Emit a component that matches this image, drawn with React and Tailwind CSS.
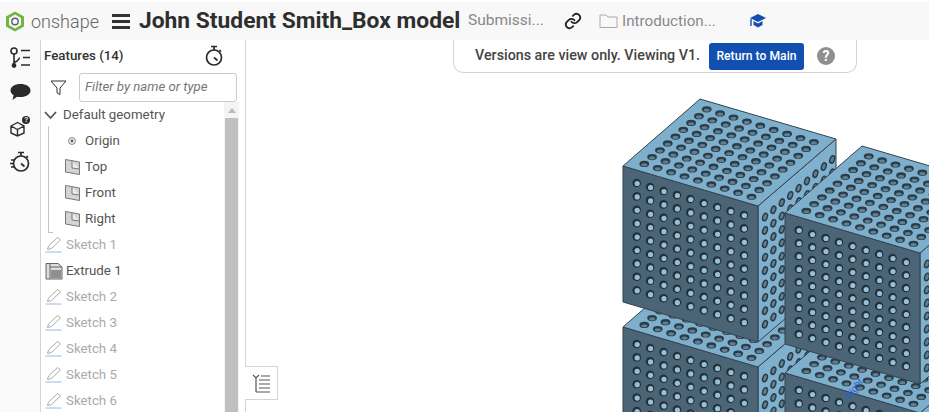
import { Fragment } from "react";

const range = (n) => Array.from({ length: n }, (_, i) => i);

// one 9x9 cube of the perforated box, positioned by its left vertex
const Cube = ({ x, y, h = 136, step = 13.4 }) => {
    const top = `${x},${y} ${x + 77},${y - 67} ${x + 213},${y - 27} ${x + 135},${y + 40}`;
    const left = `${x},${y} ${x + 135},${y + 40} ${x + 135},${y + 40 + h} ${x},${y + h}`;
    const right = `${x + 135},${y + 40} ${x + 213},${y - 27} ${x + 213},${y - 27 + h} ${x + 135},${y + 40 + h}`;
    return (
        <g>
            <polygon points={right} fill="#7fb0cd" stroke="#33434e" strokeWidth="1" />
            {range(9).map((c) =>
                range(9).map((r) => {
                    const cx = x + 142 + c * 8.4;
                    const cy = y + 51 - c * 7.2 + r * step;
                    return (
                        <Fragment key={`r${c}-${r}`}>
                            <ellipse cx={cx} cy={cy} rx="2.9" ry="4.6" fill="#2c3c46" transform={`rotate(20 ${cx} ${cy})`} />
                            <ellipse cx={cx} cy={cy} rx="1.5" ry="3" fill="#5f7f93" transform={`rotate(20 ${cx} ${cy})`} />
                        </Fragment>
                    );
                }),
            )}
            <polygon points={left} fill="#4b6576" stroke="#33434e" strokeWidth="1" />
            {range(9).map((c) =>
                range(9).map((r) => (
                    <Fragment key={`l${c}-${r}`}>
                        <circle cx={x + 13.7 + c * 13.4} cy={y + 17 + c * 4 + r * step} r="4.3" fill="#22313a" />
                        <circle cx={x + 14.2 + c * 13.4} cy={y + 17.5 + c * 4 + r * step} r="2.6" fill="#97c0d6" />
                    </Fragment>
                )),
            )}
            <polygon points={top} fill="#7eafcc" stroke="#33434e" strokeWidth="1" />
            {range(9).map((c) =>
                range(9).map((r) => (
                    <Fragment key={`t${c}-${r}`}>
                        <ellipse cx={x + 83.7 + c * 13.4 - r * 7.8} cy={y - 56.7 + c * 4.1 + r * 6.83} rx="4.9" ry="3.1" fill="#2c3c46" />
                        <ellipse cx={x + 83.7 + c * 13.4 - r * 7.8} cy={y - 55.9 + c * 4.1 + r * 6.83} rx="3" ry="1.6" fill="#5f7f93" />
                    </Fragment>
                )),
            )}
        </g>
    );
};

const Model = () => (
    <svg className="absolute left-0 top-0" width="929" height="412" viewBox="0 0 929 412">
        <Cube x={623} y={327} />
        <Cube x={785} y={373} />
        <Cube x={623} y={166} />
        <Cube x={785} y={213} h={131} step={13} />
        <text x="846" y="398" fontSize="10" fontStyle="italic" fill="#2b62d9" fontFamily="Liberation Sans, sans-serif" transform="rotate(-52 850 396)">
            Right
        </text>
    </svg>
);

const PlaneIcon = () => (
    <svg width="18" height="18" viewBox="0 0 18 18" className="shrink-0">
        <path d="M1.5 1.5 L15.5 4 V16.5 L1.5 14 Z" fill="#d4d4d4" stroke="#777" strokeWidth="1" />
        <path d="M8 3 V10 L15.5 11" fill="#ececec" stroke="#777" strokeWidth="1" />
    </svg>
);

const SketchIcon = () => (
    <svg width="18" height="18" viewBox="0 0 18 18" className="shrink-0">
        <path d="M2.5 13.5 L3.5 10 L12.5 1.5 L15.5 4 L6.5 12.5 Z" fill="none" stroke="#aaa" strokeWidth="1" />
        <path d="M0.5 16 H16.5" stroke="#9db9e6" strokeWidth="1" />
    </svg>
);

const ExtrudeIcon = () => (
    <svg width="18" height="18" viewBox="0 0 18 18" className="shrink-0">
        <path d="M1 1.5 H13 L17 5 V17 H1 Z" fill="#dcdcdc" stroke="#666" strokeWidth="1" />
        <path d="M5 5 H17 M5 1.5 V17" stroke="#666" strokeWidth="1" />
        <rect x="6" y="8" width="10" height="8" fill="#8f8f8f" />
    </svg>
);

const Stopwatch = ({ speed }) => (
    <svg width="20" height="22" viewBox="0 0 20 22" fill="none" stroke="#2b2b2b" strokeWidth="1.7">
        <circle cx="11" cy="12.5" r="7.5" />
        <path d="M8 1.5 H14 M11 1.5 V5 M16.5 5 L18 6.5 M11 12.5 L14.5 15.5" />
        {speed && <path d="M1 9 H4.5 M0 12.5 H3 M1 16 H4.5" strokeWidth="1.4" />}
    </svg>
);

const Row = ({ icon, label, muted, indent }) => (
    <div className={`flex h-[26px] items-center ${indent ? "pl-[23px]" : "pl-[4px]"}`}>
        {icon}
        <span className={`ml-[3px] text-[13.3px] ${muted ? "text-[#aaaaaa]" : "text-[#555555]"}`}>{label}</span>
    </div>
);

const App = () => {
    return (
        <div className="relative flex h-[412px] w-[929px] flex-col overflow-hidden bg-white font-['Roboto',sans-serif]">
            <header className="mt-[2px] flex h-[38px] shrink-0 items-center bg-[#f8f8f8]">
                <svg width="20" height="21" viewBox="0 0 20 21" className="ml-[5px] shrink-0">
                    <path d="M10 .5 L19 5.5 V15.5 L10 20.5 L1 15.5 V5.5 Z" fill="#6fb53e" />
                    <path d="M10 3.5 L16 7 V14 L10 17.5 L4 14 V7 Z" fill="#f8f8f8" />
                    <circle cx="10" cy="10.5" r="3.2" fill="none" stroke="#57636b" strokeWidth="1.4" />
                </svg>
                <span className="ml-[6px] w-[76px] shrink-0 text-[18px] font-light text-[#666666]">onshape</span>
                <div className="ml-[5px] flex w-[18px] shrink-0 flex-col gap-[3px]">
                    <div className="h-[3px] bg-[#333333]" />
                    <div className="h-[3px] bg-[#333333]" />
                    <div className="h-[3px] bg-[#333333]" />
                </div>
                <h1 className="ml-[9px] w-[321px] shrink-0 whitespace-nowrap text-[22.8px] font-bold text-[#2e2e2e]">John Student Smith_Box model</h1>
                <span className="ml-[8px] w-[77px] shrink-0 text-[15.5px] text-[#888888]">Submissi...</span>
                <svg width="18" height="18" viewBox="0 0 24 24" fill="none" stroke="#222" strokeWidth="2.4" strokeLinecap="round" className="ml-[19px] shrink-0">
                    <path d="M10 13a5 5 0 0 0 7.5.5l3-3a5 5 0 0 0-7-7l-1.7 1.7" />
                    <path d="M14 11a5 5 0 0 0-7.5-.5l-3 3a5 5 0 0 0 7 7l1.7-1.7" />
                </svg>
                <svg width="19" height="16" viewBox="0 0 19 16" fill="none" stroke="#aaaaaa" strokeWidth="1" className="ml-[17px] shrink-0">
                    <path d="M1 14.5 V2 H7 L9 4 H18 V14.5 Z" />
                </svg>
                <span className="ml-[4px] w-[97px] shrink-0 text-[15.2px] text-[#888888]">Introduction...</span>
                <svg width="16" height="15" viewBox="0 0 16 15" className="ml-[31px] shrink-0">
                    <path d="M8 0 L16 4 L8 8 L0 4 Z" fill="#1150b0" />
                    <path d="M3.5 7 V11 L8 13.5 L12.5 11 V7 L8 9.5 Z" fill="#1150b0" />
                    <path d="M1 5 V12" stroke="#1150b0" strokeWidth="1.4" />
                </svg>
            </header>
            <div className="flex min-h-0 flex-1">
                <aside className="flex w-[41px] shrink-0 flex-col items-center gap-[14px] border-r border-[#d4d4d4] bg-[#fafafa] pt-[7px]">
                    <svg width="22" height="22" viewBox="0 0 22 22" fill="none" stroke="#2b2b2b" strokeWidth="1.6">
                        <circle cx="5" cy="4" r="3" />
                        <path d="M5 7 V18 M5 15 C10 15 9 11 11 11" />
                        <circle cx="5" cy="18.5" r="1.6" fill="#2b2b2b" />
                        <path d="M12 3.5 H21 M14 10.5 H21 M12 18 H21" />
                    </svg>
                    <svg width="21" height="18" viewBox="0 0 21 18">
                        <path d="M10.5 1 C16 1 20.5 3.6 20.5 7.5 C20.5 11.4 16 14 10.5 14 C9 14 8 14 7 13.7 L2.5 17 L3.6 12.3 C1.6 11 .5 9.4 .5 7.5 C.5 3.6 5 1 10.5 1 Z" fill="#2b2b2b" />
                    </svg>
                    <svg width="21" height="22" viewBox="0 0 21 22" fill="none" stroke="#2b2b2b" strokeWidth="1.4">
                        <path d="M1 11 L7.5 7.5 L14 11 V18 L7.5 21 L1 18 Z M1 11 L7.5 14.5 L14 11 M7.5 14.5 V21" />
                        <circle cx="16" cy="5" r="4" fill="#2b2b2b" stroke="none" />
                        <text x="14.3" y="7.4" fontSize="6.5" fontWeight="700" fill="#fff" stroke="none" fontFamily="Liberation Sans, sans-serif">?</text>
                    </svg>
                    <Stopwatch speed />
                </aside>
                <section className="relative flex w-[205px] shrink-0 flex-col overflow-hidden border-r border-[#d4d4d4]">
                    <div className="flex h-[32px] shrink-0 items-center pl-[3px] pr-[22px]">
                        <span className="flex-1 text-[13.3px] font-medium text-[#333333]">Features (14)</span>
                        <Stopwatch />
                    </div>
                    <div className="flex h-[30px] shrink-0 items-center pl-[9px]">
                        <svg width="17" height="17" viewBox="0 0 17 17" fill="none" stroke="#333" strokeWidth="1">
                            <path d="M1 2 H16 L10 9 V15.5 L7 14 V9 Z" />
                        </svg>
                        <div className="ml-[12px] flex h-[29px] w-[158px] items-center rounded-[3px] border border-[#cccccc] pl-[5px] text-[13.2px] italic text-[#777777]">
                            Filter by name or type
                        </div>
                    </div>
                    <div className="flex min-h-0 flex-1">
                        <div className="relative min-w-0 flex-1">
                            <div className="flex h-[26px] items-center pl-[3px]">
                                <svg width="13" height="9" viewBox="0 0 13 9" fill="none" stroke="#555" strokeWidth="1.8">
                                    <path d="M1 1 L6.5 7 L12 1" />
                                </svg>
                                <span className="ml-[6px] text-[13.3px] text-[#555555]">Default geometry</span>
                            </div>
                            <div className="absolute left-[7px] top-[24px] h-[107px] w-[5px] border-b border-l border-[#c4c4c4]" />
                            <div className="flex h-[26px] items-center pl-[27px]">
                                <svg width="8" height="8" viewBox="0 0 8 8" className="shrink-0">
                                    <circle cx="4" cy="4" r="3.4" fill="none" stroke="#777" />
                                    <circle cx="4" cy="4" r="1.4" fill="#555" />
                                </svg>
                                <span className="ml-[9px] text-[13.3px] text-[#555555]">Origin</span>
                            </div>
                            <Row indent icon={<PlaneIcon />} label="Top" />
                            <Row indent icon={<PlaneIcon />} label="Front" />
                            <Row indent icon={<PlaneIcon />} label="Right" />
                            <Row muted icon={<SketchIcon />} label="Sketch 1" />
                            <Row icon={<ExtrudeIcon />} label="Extrude 1" />
                            <Row muted icon={<SketchIcon />} label="Sketch 2" />
                            <Row muted icon={<SketchIcon />} label="Sketch 3" />
                            <Row muted icon={<SketchIcon />} label="Sketch 4" />
                            <Row muted icon={<SketchIcon />} label="Sketch 5" />
                            <Row muted icon={<SketchIcon />} label="Sketch 6" />
                        </div>
                        <div className="mr-[6px] flex w-[15px] shrink-0 flex-col items-center bg-[#f4f4f4]">
                            <div className="mt-[6px] h-0 w-0 border-x-[4px] border-b-[5px] border-x-transparent border-b-[#bbbbbb]" />
                            <div className="mt-[5px] w-[13px] flex-1 bg-[#c0c0c0]" />
                        </div>
                    </div>
                </section>
                <main className="relative flex-1" />
            </div>
            <Model />
            <div className="absolute left-[453px] top-[40px] flex h-[33px] w-[404px] items-center rounded-b-[10px] border border-t-0 border-[#d4d4d4] bg-white pl-[21px]">
                <span className="w-[226px] shrink-0 text-[14.3px] font-medium text-[#444444]">Versions are view only. Viewing V1.</span>
                <button className="ml-[8px] h-[27px] w-[95px] rounded-[3px] bg-[#1150b0] text-[12.2px] font-medium text-white">Return to Main</button>
                <div className="ml-[13px] flex h-[18px] w-[18px] items-center justify-center rounded-full bg-[#8f8f8f] text-[14px] font-bold text-white">?</div>
            </div>
            <div className="absolute left-[245px] top-[366px] flex h-[34px] w-[33px] items-center justify-center border border-l-0 border-[#d4d4d4] bg-white">
                <svg width="19" height="19" viewBox="0 0 19 19" fill="none" stroke="#555" strokeWidth="1.2">
                    <path d="M1 1 L4 4 L7 1 M4 4 V18 M7 6 H18 M7 10 H18 M7 14 H18 M4 18 H18 M9 2 H18" />
                </svg>
            </div>
        </div>
    );
};

export default App;
